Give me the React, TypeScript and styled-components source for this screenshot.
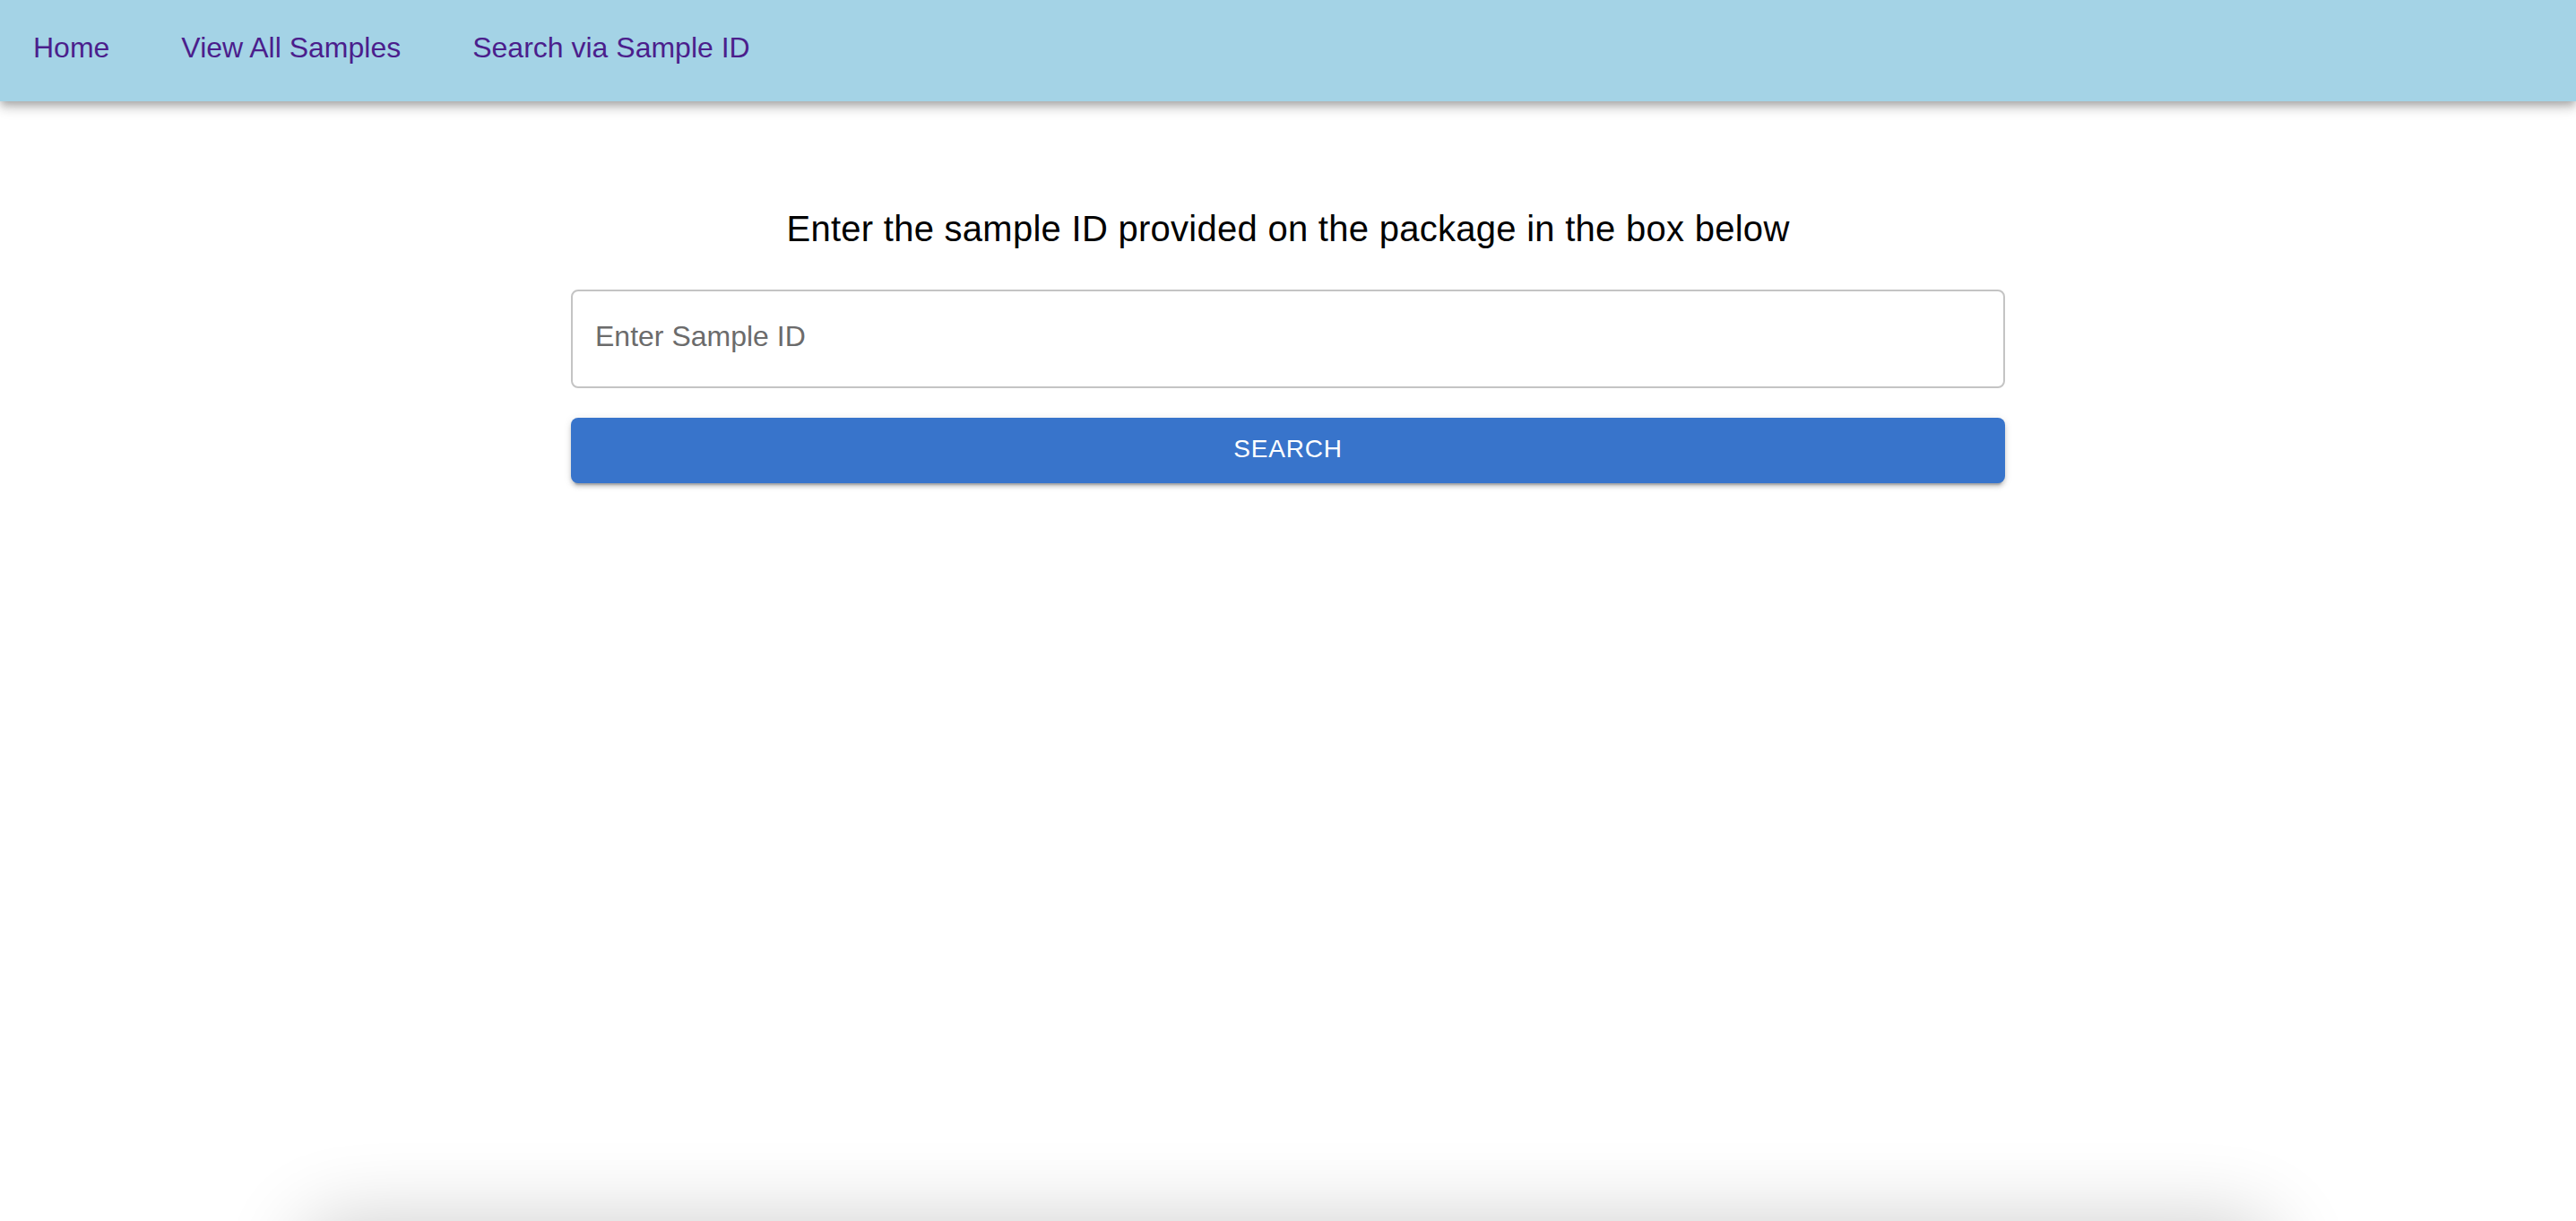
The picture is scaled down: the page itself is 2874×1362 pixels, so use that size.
import styled, { createGlobalStyle } from "styled-components";

const GlobalStyle = createGlobalStyle`
  html, body {
    margin: 0;
    padding: 0;
    background: #ffffff;
    font-family: "Liberation Sans", Arial, Helvetica, sans-serif;
  }
  * {
    box-sizing: border-box;
  }
`;

const NavBar = styled.nav`
  position: relative;
  z-index: 2;
  height: 113px;
  display: flex;
  align-items: flex-start;
  gap: 80px;
  padding: 35px 37px 0;
  background: #a4d3e6;
  box-shadow: 0 4px 8px -2px rgba(0, 0, 0, 0.2), 0 8px 10px 0 rgba(0, 0, 0, 0.14),
    0 2px 20px 0 rgba(0, 0, 0, 0.12);
`;

const NavLink = styled.a`
  font-size: 32px;
  line-height: 37px;
  color: #4b1e8c;
  text-decoration: none;
  cursor: pointer;
`;

const Main = styled.main`
  min-height: calc(100vh - 113px);
  display: flex;
  flex-direction: column;
  align-items: center;
  padding-top: 110px;
`;

const SearchForm = styled.form`
  width: 1600px;
  display: flex;
  flex-direction: column;
  align-items: stretch;
`;

const Title = styled.h2`
  margin: 0 0 36px;
  font-size: 40px;
  font-weight: 400;
  line-height: 64px;
  letter-spacing: 0.27px;
  color: #000000;
  text-align: center;
`;

const IdInput = styled.input`
  height: 110px;
  padding: 0 25px 5px;
  border: 2px solid #c4c4c4;
  border-radius: 8px;
  font-family: inherit;
  font-size: 32px;
  color: #222;
  outline: none;
  &::placeholder {
    color: #6b6b6b;
  }
`;

const SearchButton = styled.button`
  margin-top: 33px;
  height: 73px;
  padding: 0 0 3px;
  border: none;
  border-radius: 8px;
  background: #3874cb;
  color: #ffffff;
  font-family: inherit;
  font-size: 28px;
  letter-spacing: 0.8px;
  text-transform: uppercase;
  cursor: pointer;
  box-shadow: 0 6px 2px -4px rgba(0, 0, 0, 0.2), 0 4px 4px 0 rgba(0, 0, 0, 0.14),
    0 2px 10px 0 rgba(0, 0, 0, 0.12);
`;

const ResultsPaper = styled.section`
  width: 2200px;
  height: 400px;
  margin: 0 auto;
  border-radius: 40px;
  background: #ffffff;
  box-shadow: 0 0 90px 0 rgba(0, 0, 0, 0.2);
`;

const App = () => {
  return (
    <>
      <GlobalStyle />
      <NavBar>
        <NavLink>Home</NavLink>
        <NavLink>View All Samples</NavLink>
        <NavLink>Search via Sample ID</NavLink>
      </NavBar>
      <Main>
        <SearchForm onSubmit={(e) => e.preventDefault()}>
          <Title>Enter the sample ID provided on the package in the box below</Title>
          <IdInput type="text" placeholder="Enter Sample ID" />
          <SearchButton type="submit">Search</SearchButton>
        </SearchForm>
      </Main>
      <ResultsPaper />
    </>
  );
};

export default App;
